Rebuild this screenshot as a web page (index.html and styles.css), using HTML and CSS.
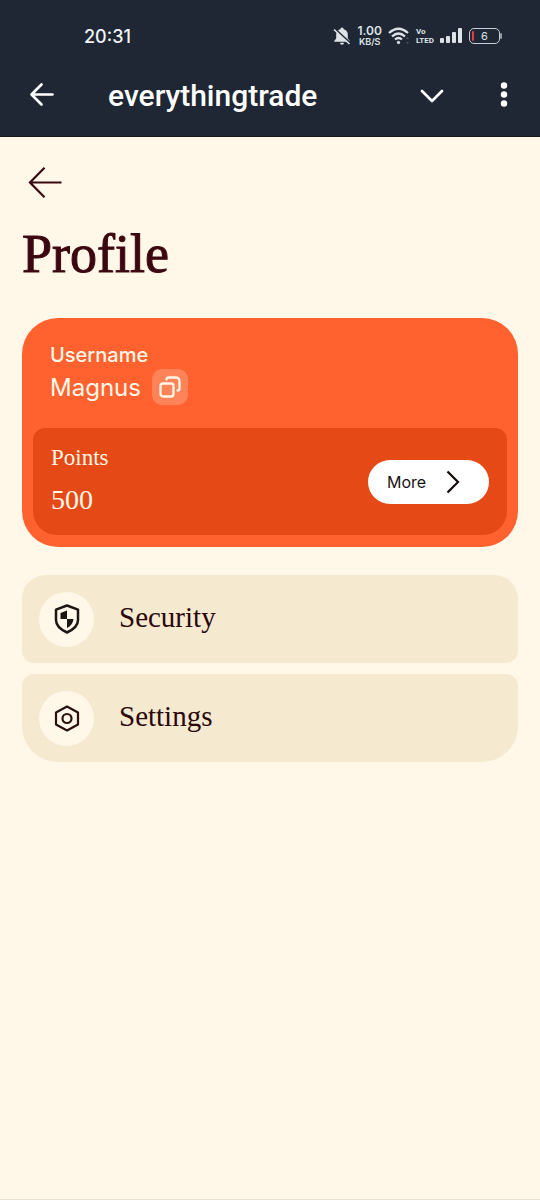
FILE: index.html
```html
<!DOCTYPE html>
<html lang="en">
<head>
<meta charset="utf-8">
<meta name="viewport" content="width=device-width, initial-scale=1">
<title>Profile</title>
<link rel="stylesheet" href="styles.css">
</head>
<body class="page">
<header class="top">
  <div class="status">
    <span class="clock">20:31</span>
    <div class="indicators">
      <svg width="18" height="20" viewBox="0 0 18 20" fill="#dfe3e8"><path d="M9 1.500a1.700 1.700 0 0 1 1.700 1.700c2.700.7 4.100 2.700 4.100 5.300v4l2 2.500v.8H1.200v-.8l2-2.500v-4c0-2.600 1.500-4.600 4.100-5.300A1.700 1.700 0 0 1 9 1.500zM7 16.700h4a2 2 0 0 1-4 0z"/><path d="M2 3 17.500 17.500" stroke="#1e2733" stroke-width="2"/><path d="M1 3.500 16.500 18" stroke="#dfe3e8" stroke-width="1.600"/></svg>
      <span class="speed"><span class="rate">1.00</span><span class="unit">KB/S</span></span>
      <svg width="22" height="20" viewBox="0 0 22 20" fill="none" stroke="#dfe3e8" stroke-width="2.300"><path d="M1 7Q10.500-1.500 20 7M4 10.500q6.500-6 13 0M7 13.500q3.500-3 7 0"/><circle cx="10.500" cy="16.500" r="1.200" fill="#dfe3e8" stroke-width="1"/><path d="m18 13 1.500-2 1.500 2zm0 3 1.500 2 1.500-2z" fill="#4b5561" stroke="none"/></svg>
      <span class="lte"><span>Vo</span><span>LTED</span></span>
      <svg width="23" height="18" viewBox="0 0 23 18" fill="#dfe3e8"><rect x="0" y="11" width="4" height="5" rx="1"/><rect x="6" y="9" width="4" height="7" rx="1"/><rect x="12" y="5" width="4" height="11" rx="1"/><rect x="18" y="1" width="4" height="15" rx="1"/></svg>
      <span class="battery"><span class="level"></span><span class="charge">6</span></span>
    </div>
  </div>
  <div class="appbar">
    <button class="icon-button" aria-label="Back"><svg width="28" height="26" viewBox="0 0 28 26" fill="none" stroke="#fff" stroke-width="2.700" stroke-linecap="round" stroke-linejoin="round"><path d="M24.500 12.500H3.500M13.500 2.500l-10 10 10 10"/></svg></button>
    <span class="app-name">everythingtrade</span>
    <button class="icon-button" aria-label="Collapse"><svg width="26" height="26" viewBox="0 0 26 26" fill="none" stroke="#fff" stroke-width="2.700" stroke-linecap="round" stroke-linejoin="round"><path d="m3 9 10 10L23 9"/></svg></button>
    <button class="icon-button menu" aria-label="Menu"><svg width="8" height="26" viewBox="0 0 8 26" fill="#fff"><circle cx="4" cy="3.500" r="3.200"/><circle cx="4" cy="12.500" r="3.200"/><circle cx="4" cy="21.500" r="3.200"/></svg></button>
  </div>
</header>
<main class="content">
  <button class="icon-button back" aria-label="Go back"><svg width="36" height="32" viewBox="0 0 36 32" fill="none" stroke="#3b0710" stroke-width="2.200"><path d="M34.500 15.500H3M17.500.800 3 15.500l14.500 14.700"/></svg></button>
  <h1 class="title">Profile</h1>
  <section class="card">
    <div class="user">
      <div class="user-label">Username</div>
      <div class="user-line">
        <span class="user-name">Magnus</span>
        <button class="copy" aria-label="Copy username"><svg width="22" height="22" viewBox="0 0 22 22" fill="none" stroke="#fff7e7" stroke-width="2.300" stroke-linecap="round" stroke-linejoin="round"><rect x="1.500" y="7.500" width="13" height="13" rx="2.500"/><path d="M7.500 3.500q0-2 2-2H17a3.500 3.500 0 0 1 3.500 3.500v7.500q0 2-2 2"/></svg></button>
      </div>
    </div>
    <div class="points">
      <div>
        <div class="points-label">Points</div>
        <div class="points-value">500</div>
      </div>
      <button class="more">More<svg width="14" height="24" viewBox="0 0 14 24" fill="none" stroke="#120808" stroke-width="2.200"><path d="m1.500 1.500 10.500 10.500L1.500 22.500"/></svg></button>
    </div>
  </section>
  <nav class="list">
    <a class="row" href="#security">
      <span class="badge"><svg width="28" height="32" viewBox="0 0 28 32" fill="none"><path d="M14 2.500 25 6.700V17c0 5-4.500 9.500-11 12.500C7.500 26.500 3 22 3 17V6.700z" stroke="#1a1714" stroke-width="2.500" stroke-linejoin="round"/><path d="M14 7.500V16H7.500V10zM14 16h6.500c-.3 4-2.800 7.200-6.500 9z" fill="#1a1714"/></svg></span>
      <span class="row-text">Security</span>
    </a>
    <a class="row" href="#settings">
      <span class="badge"><svg width="28" height="28" viewBox="0 0 28 28" fill="none" stroke="#2a1112" stroke-width="2.200" stroke-linejoin="round"><path d="M14 2.500 25 8.500v12L14 26.500 3 20.500v-12z"/><circle cx="14" cy="14.500" r="4.500"/></svg></span>
      <span class="row-text">Settings</span>
    </a>
  </nav>
</main>
</body>
</html>
```
FILE: styles.css
```css
* { box-sizing: border-box; }

.page {
  margin: 0;
  min-height: 100vh;
  background: #fff7e7;
  border-bottom: 1px solid #e9e2d4;
  font-family: Inter, "Liberation Sans", sans-serif;
}

button {
  padding: 0;
  border: 0;
  background: none;
  color: inherit;
  font: inherit;
}

.icon-button { display: flex; }

.top {
  padding-bottom: 18px;
  background: #1e2733;
  border-bottom: 1px solid #14181d;
  color: #fff;
}

.status {
  display: flex;
  align-items: center;
  justify-content: space-between;
  height: 72px;
  padding: 0 40px 0 84px;
  color: #dfe3e8;
}

.clock {
  color: #f2f4f6;
  font-size: 18px;
  font-weight: 500;
}

.indicators {
  display: flex;
  align-items: center;
  gap: 6px;
}

.speed, .lte {
  display: flex;
  flex-direction: column;
  align-items: center;
  font-weight: 600;
}

.rate { font-size: 12px; line-height: 12px; }
.unit { font-size: 9px; line-height: 10px; }

.lte {
  align-items: flex-start;
  font-family: Roboto, sans-serif;
  font-size: 8px;
  font-weight: 700;
  line-height: 9px;
}

.battery {
  position: relative;
  display: flex;
  align-items: center;
  justify-content: center;
  width: 31px;
  height: 16px;
  border: 1px solid #c9ced4;
  border-radius: 5px;
}

.battery::after {
  content: "";
  position: absolute;
  right: -3px;
  width: 2px;
  height: 6px;
  border-radius: 1px;
  background: #9299a1;
}

.level {
  position: absolute;
  left: 2px;
  width: 2px;
  height: 10px;
  border-radius: 1px;
  background: #e53b4c;
}

.charge { font-size: 11px; }

.appbar {
  display: flex;
  align-items: center;
  height: 46px;
  padding: 0 32px 0 28px;
}

.app-name {
  flex: 1;
  padding-left: 52px;
  font-family: Roboto, sans-serif;
  font-size: 30px;
  font-weight: 500;
}

.menu { margin-left: 55px; }

.content { padding: 30px 22px; }

.back { margin-left: 5px; }

.title {
  margin: 22px 0 30px;
  color: #3b0710;
  font-family: "Liberation Serif", serif;
  font-size: 54px;
  font-weight: 400;
  line-height: 67px;
  -webkit-text-stroke: 1px #3b0710;
}

.card {
  padding: 23px 11px 12px;
  border-radius: 36px;
  background: #ff622f;
  color: #fff7e7;
}

.user { padding: 0 17px 23px; }

.user-label {
  font-size: 20px;
  font-weight: 500;
  line-height: 28px;
}

.user-line {
  display: flex;
  align-items: center;
  gap: 11px;
}

.user-name { font-size: 24px; }

.copy {
  display: grid;
  place-items: center;
  width: 36px;
  height: 36px;
  border-radius: 10px;
  background: #ff8359;
}

.points {
  display: flex;
  align-items: center;
  justify-content: space-between;
  padding: 12px 18px;
  border-radius: 12px 12px 24px 24px;
  background: #e54915;
  font-family: "Liberation Serif", serif;
}

.points-label { font-size: 23px; line-height: 36px; }
.points-value { font-size: 28px; line-height: 47px; }

.more {
  display: flex;
  align-items: center;
  justify-content: space-between;
  width: 121px;
  height: 44px;
  padding: 0 29px 0 19px;
  border-radius: 22px;
  background: #fff;
  color: #181414;
  font-family: Inter, sans-serif;
  font-size: 16px;
}

.list {
  display: grid;
  gap: 11px;
  margin-top: 28px;
}

.row {
  display: flex;
  align-items: center;
  gap: 25px;
  height: 88px;
  padding: 0 17px;
  border-radius: 24px 24px 12px 12px;
  background: #f5e9d0;
  color: #2a080c;
  text-decoration: none;
}

.row:last-child { border-radius: 12px 12px 36px 36px; }

.badge {
  display: grid;
  place-items: center;
  width: 55px;
  height: 55px;
  border-radius: 50%;
  background: #fff7e7;
}

.row-text {
  padding-bottom: 3px;
  font-family: "Liberation Serif", serif;
  font-size: 29px;
}
```
